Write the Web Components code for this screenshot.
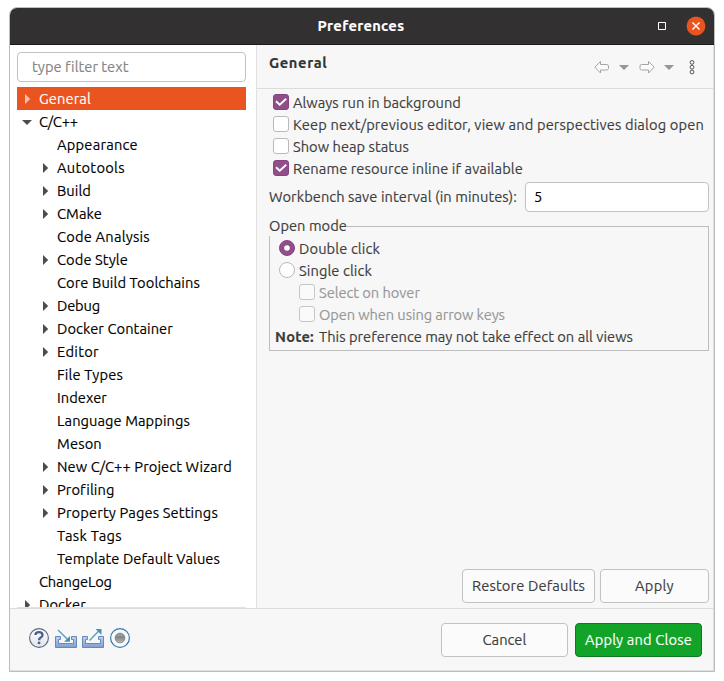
<!DOCTYPE html>
<html lang="en">
<head>
<meta charset="utf-8">
<title>Preferences</title>
<style>
html,body{margin:0;background:#fff}
body{width:724px;height:681px;overflow:hidden;font:14.667px/22px "Ubuntu","Noto Sans","Open Sans",sans-serif;color:#3d3d3d;-webkit-text-stroke:.15px}
</style>
</head>
<body>
<pref-dialog></pref-dialog>
<script>
function define(name, html, setup) {
  const tpl = document.createElement('template');
  tpl.innerHTML = html;
  customElements.define(name, class extends HTMLElement {
    constructor() {
      super();
      this.attachShadow({mode: 'open'}).append(tpl.content.cloneNode(true));
    }
    connectedCallback() { if (setup) setup(this, this.shadowRoot); }
  });
}

/* A label whose tracking is adjusted to occupy the width given in "w". */
define('fit-text', `<style>:host{display:inline-block;white-space:nowrap;flex:none}</style><span></span>`, (el, root) => {
  const s = root.querySelector('span');
  s.textContent = el.getAttribute('text');
  const w = +el.getAttribute('w');
  el.style.width = w + 'px';
  const natural = s.getBoundingClientRect().width;
  const gap = (w - .1 - natural) / s.textContent.length;
  if (Math.abs(gap) > .01) s.style.letterSpacing = gap + 'px';
});

define('title-bar', `<style>
:host{display:grid;grid-template-columns:1fr auto 1fr;align-items:center;height:37px;box-sizing:border-box;
 background:#323030;border-bottom:1px solid #1c1b1b;color:#fff;font-weight:700}
.c{display:flex;justify-content:flex-end;align-items:center;gap:19px;padding-right:8px}
fit-text{margin-right:2px}
svg{display:block}
.x{margin-top:-1px}
</style>
<span></span><fit-text text="Preferences" w="87"></fit-text>
<div class="c"><svg class="m" width="10" height="10"><path d="M1.5 1.5h7v7h-7z" fill="none" stroke="#fff"/></svg>
<svg class="x" width="20" height="20"><circle cx="10" cy="10" r="9.4" fill="#e95420"/><path d="M6.5 6.5l7 7M13.5 6.5l-7 7" stroke="#fff" stroke-width="1.4"/></svg></div>`);

define('text-field', `<style>
:host{display:flex;align-items:center;box-sizing:border-box;height:30px;border:1px solid #c2c2c2;border-radius:4px;background:#fff}
</style><slot></slot>`);

define('tree-item', `<style>
:host{display:flex;align-items:center;height:23px;box-sizing:border-box;color:#000;flex:none;padding-left:4px}
:host([level="2"]){padding-left:22px}
:host([selected]){background:#e95420;color:#fff}
.a{width:12px;margin-right:6px;height:12px;flex:none}
path{fill:#4c4c4c}
:host([selected]) path{fill:#f8c0ab}
</style><svg class="a" viewBox="0 0 12 12"><path></path></svg><slot></slot>`, (el, root) => {
  const d = {closed: 'M4 1L9.2 6L4 11z', open: 'M1 4L11 4L6 9z'};
  root.querySelector('path').setAttribute('d', d[el.getAttribute('state')] || '');
});

define('pref-tree', `<style>
:host{display:flex;flex-direction:column;width:229px;height:520px;overflow:hidden;border-bottom:1px solid #e2e2e2}
</style>`, (el, root) => {
  const rows = [['General',52,1,'closed'],['C/C++',39,1,'open'],['Appearance',81,2],['Autotools',68,2,'closed'],['Build',34,2,'closed'],
   ['CMake',45,2,'closed'],['Code Analysis',93,2],['Code Style',71,2,'closed'],['Core Build Toolchains',143,2],['Debug',43,2,'closed'],
   ['Docker Container',116,2,'closed'],['Editor',42,2,'closed'],['File Types',66,2],['Indexer',50,2],['Language Mappings',133,2],
   ['Meson',45,2],['New C/C++ Project Wizard',175,2,'closed'],['Profiling',57,2,'closed'],['Property Pages Settings',161,2,'closed'],
   ['Task Tags',65,2],['Template Default Values',163,2],['ChangeLog',73,1],['Docker',47,1,'closed']];
  rows.forEach(([t, w, l, s], i) => {
    root.innerHTML += `<tree-item level="${l}" ${s ? `state="${s}"` : ''} ${i ? '' : 'selected'}><fit-text text="${t}" w="${w}"></fit-text></tree-item>`;
  });
});

define('check-row', `<style>
:host{display:flex;align-items:center;gap:4px;height:22px}
.b{width:16px;height:16px;box-sizing:border-box;border:1px solid #b9b9b9;border-radius:3px;background:#fff;flex:none;margin-bottom:2px}
:host([radio]) .b{border-radius:50%}
:host([disabled]){color:#979797}
:host([disabled]) .b{background:#fafafa;border-color:#c6c6c6}
:host([checked]) .b{background:#924d8b;border-color:#87457f}
svg{display:none;width:14px;height:14px}
:host([checked]:not([radio])) .k,:host([checked][radio]) .r{display:block}
</style><div class="b"><svg class="k" viewBox="0 0 14 14"><path d="M2 6.2L5.7 9.8L12.2 3.7" fill="none" stroke="#fff" stroke-width="1.9"/></svg>
<svg class="r" viewBox="0 0 14 14"><circle cx="7" cy="7" r="2.8" fill="#fff"/></svg></div><slot></slot>`);

define('push-button', `<style>
:host{display:flex;align-items:center;justify-content:center;box-sizing:border-box;height:34px;border:1px solid #c2c2c2;border-radius:4px;background:#fbfbfb}
:host([primary]){background:#12a428;border-color:#0d7b1d;color:#fff}
</style><slot></slot>`);

define('nav-bar', `<style>
:host{display:flex;justify-content:space-between;height:43px;border-bottom:1px solid #dcdcdc;padding:0 16px 0 12px;color:#333}
fit-text{font-weight:700;margin-top:7px}
svg{margin-top:14px}
</style><fit-text text="General" w="58.5"></fit-text>
<svg width="104" height="18" fill="none">
<g stroke="#a4a4a4" stroke-linejoin="round"><path d="M.8 8.2L6.5 2.5V5.5H12Q14.5 5.5 14.5 7V9.5Q14.5 11 12 11H6.5V14Z" fill="#fbfbfb"/>
<path d="M60.2 8.2L54.5 2.5V5.5H47.5Q46 5.5 46 7V9.5Q46 11 47.5 11H54.5V14Z" fill="#fbfbfb"/></g>
<path d="M25 6h10l-5 5zM70 6h10l-5 5z" fill="#969696"/>
<g stroke="#444" stroke-width=".9"><circle cx="98" cy="3.4" r="1.9"/><circle cx="98" cy="8.2" r="1.9"/><circle cx="98" cy="13" r="1.9"/></g></svg>`);

define('option-group', `<style>
fieldset{margin:0;min-width:0;box-sizing:border-box;width:440px;height:134px;border:1px solid #bdbdbd;padding:0 0 0 9px}
legend{margin-left:-10px;padding:0;height:19px;line-height:18px}
:host{display:block}
.i{padding-left:20px}
.n{display:flex;gap:5px;margin-left:-4px}
b{font-weight:700}
.stack{margin-top:2px}
</style><fieldset><legend><fit-text text="Open mode" w="78"></fit-text></legend><div class="stack">
<check-row radio checked><fit-text text="Double click" w="81"></fit-text></check-row>
<check-row radio><fit-text text="Single click" w="73"></fit-text></check-row>
<check-row class="i" disabled><fit-text text="Select on hover" w="101"></fit-text></check-row>
<check-row class="i" disabled><fit-text text="Open when using arrow keys" w="186"></fit-text></check-row>
<div class="n"><b><fit-text text="Note:" w="39"></fit-text></b><fit-text text="This preference may not take effect on all views" w="314"></fit-text></div></div></fieldset>`);

define('general-page', `<style>
:host{display:flex;flex-direction:column;flex:1;background:#f7f7f7}
.body{flex:1;display:flex;flex-direction:column;padding:3px 5px 5px 12px}
.checks{padding-left:4px}
.save{display:flex;align-items:center;justify-content:space-between;margin-top:2px}
text-field{width:184px;padding-left:8px;color:#000}
option-group{margin-top:5px}
.actions{display:flex;gap:5px;justify-content:flex-end;margin-top:auto}
</style><nav-bar></nav-bar><div class="body"><div class="checks">
<check-row checked><fit-text text="Always run in background" w="168"></fit-text></check-row>
<check-row><fit-text text="Keep next/previous editor, view and perspectives dialog open" w="411"></fit-text></check-row>
<check-row><fit-text text="Show heap status" w="116"></fit-text></check-row>
<check-row checked><fit-text text="Rename resource inline if available" w="230"></fit-text></check-row></div>
<div class="save"><fit-text text="Workbench save interval (in minutes):" w="248"></fit-text><text-field><fit-text text="5" w="8"></fit-text></text-field></div>
<option-group></option-group>
<div class="actions"><push-button style="width:133px"><fit-text text="Restore Defaults" w="113"></fit-text></push-button>
<push-button style="width:109px"><fit-text text="Apply" w="39"></fit-text></push-button></div></div>`);

define('tool-icons', `<style>:host{display:block}svg{display:block}</style>
<svg width="104" height="22" viewBox="0 0 104 22" fill="none">
<defs><linearGradient id="g" x2="0" y2="1"><stop stop-color="#fff"/><stop offset="1" stop-color="#dfe4ea"/></linearGradient>
<linearGradient id="t" x2="0" y2="1"><stop stop-color="#c3d3eb"/><stop offset="1" stop-color="#7f9dcf"/></linearGradient>
<linearGradient id="d" x2="0" y2="1"><stop stop-color="#aaa"/><stop offset=".45" stop-color="#858585"/><stop offset="1" stop-color="#bbb"/></linearGradient></defs>
<circle cx="11" cy="11" r="9.4" fill="url(#g)" stroke="#5a6781" stroke-width="1.1"/>
<path d="M7.4 8Q7.5 5.2 11 5.2Q14.5 5.2 14.5 8Q14.5 9.7 12.5 10.7Q11 11.5 11 13.3" stroke="#4a608c" stroke-width="2.3"/><path d="M9.8 14.7h2.5v2.4H9.8z" fill="#4a608c"/>
<g stroke="#6788bd"><path d="M27.5 9.5h5v3h-2v4h15v-4h-2v-3h5v11h-21z" fill="url(#t)"/>
<path d="M54.5 9.5h5v3h-2v4h15v-4h-2v-3h5v11h-21z" fill="url(#t)"/></g>
<path d="M30 3L39.5 12.3" stroke="#58a0c4" stroke-width="1.4"/><path d="M42 9v5.7h-6z" fill="#4792bd"/>
<path d="M61.5 13.5L71 3.7" stroke="#58a0c4" stroke-width="1.4"/><path d="M67.5 2H73.5V8z" fill="#4792bd"/>
<circle cx="92" cy="11" r="9.4" fill="#f6fbff" stroke="#3c75a8" stroke-width="1.2"/>
<circle cx="92" cy="11" r="4.9" fill="url(#d)" stroke="#777" stroke-width=".7"/></svg>`);

define('pref-dialog', `<style>
:host{display:flex;flex-direction:column;box-sizing:border-box;width:706px;height:665px;margin:7px 0 0 9px;
 border:1px solid #bdbdbd;border-radius:8px 8px 0 0;overflow:hidden;background:#f7f7f7}
:host{position:relative}
:host::after{content:"";position:absolute;inset:37px 0 0 0;border:solid #dedede;border-width:0 1px 1px 0}
.main{display:flex;height:563px}
.side{width:246px;box-sizing:border-box;background:#fff;padding:7px 0 0 7px;display:flex;flex-direction:column;gap:5px}
.side text-field{width:229px;padding-left:14px;color:#858585}
general-page{border-left:1px solid #e2e2e2}
.foot{display:flex;align-items:center;justify-content:space-between;flex:1;border-top:1px solid #dcdcdc;padding:0 12px 0 18px}
.foot div{display:flex;gap:7px}
tool-icons{margin-bottom:5px}
</style><title-bar></title-bar><div class="main"><div class="side"><text-field><fit-text text="type filter text" w="96"></fit-text></text-field><pref-tree></pref-tree></div>
<general-page></general-page></div>
<div class="foot"><tool-icons></tool-icons><div><push-button style="width:127px"><fit-text text="Cancel" w="44"></fit-text></push-button>
<push-button primary style="width:127px"><fit-text text="Apply and Close" w="107"></fit-text></push-button></div></div>`);
</script>
</body>
</html>
